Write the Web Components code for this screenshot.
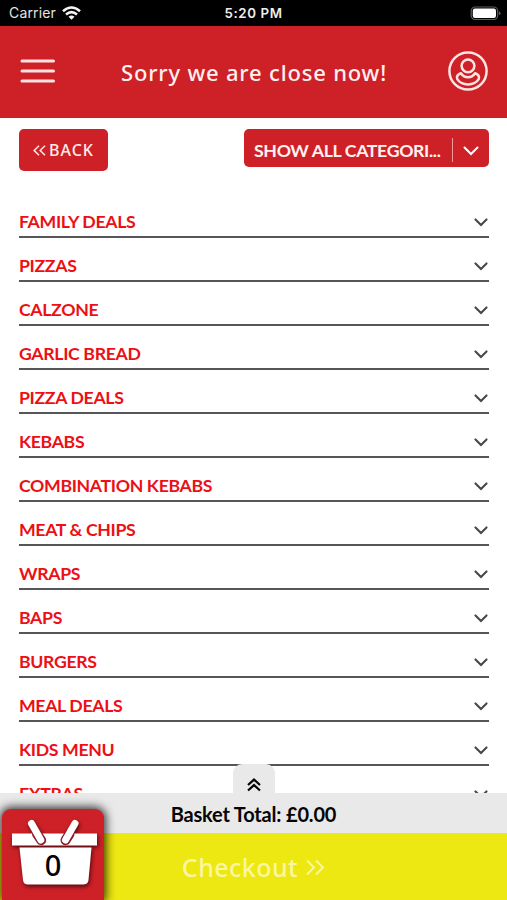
<!DOCTYPE html>
<html lang="en">
<head>
<meta charset="utf-8">
<title>Menu</title>
<style>
html,body{margin:0;height:100%;background:#fff;overflow:hidden}
</style>
</head>
<body>
<order-app></order-app>
<script>
const define = (name, html) => customElements.define(name, class extends HTMLElement {
  constructor() {
    super();
    const t = document.createElement('template');
    t.innerHTML = html;
    this.attachShadow({ mode: 'open' }).appendChild(t.content.cloneNode(true));
  }
});

define('status-bar', `
<style>
:host{display:grid;grid-template-columns:1fr auto 1fr;align-items:center;box-sizing:border-box;height:26px;background:#000;color:#e4e4e4;font:14px/24px Inter,sans-serif;padding:1px 6px 1px 9px}
.l{display:flex;align-items:center;gap:6px;letter-spacing:.15px}
.l svg{margin-top:-1px}
.t{font-weight:600;color:#eee;font-size:13.3px;letter-spacing:.6px;margin-left:-3px}
.r{display:flex;justify-content:flex-end}
svg{display:block}
</style>
<div class="l"><span>Carrier</span><svg width="19" height="14" viewBox="0 0 19 14"><g fill="none" stroke="#f4f4f4" stroke-width="2.5"><path d="M1 5.2Q9.500 -2.300 18 5.200"/><path d="M4 8.500Q9.500 3.700 15 8.500"/></g><path d="M9.500 13.700L6.500 10.700Q9.500 8.300 12.500 10.700Z" fill="#f4f4f4"/></svg></div>
<span class="t">5:20 PM</span>
<div class="r"><svg width="31" height="15" viewBox="0 0 31 15"><rect x="1.200" y="1" width="26.500" height="12.500" rx="4" fill="none" stroke="#5e5e5e" stroke-width="1.200"/><rect x="2.800" y="2.600" width="23.200" height="9.400" rx="2.200" fill="#fff"/><path d="M29 5.200q3 2 0 4z" fill="#666"/></svg></div>
`);

define('menu-icon', `
<style>:host{display:block}svg{display:block}</style>
<svg width="36" height="26" viewBox="0 0 36 26" stroke="#ffe1e1" stroke-width="3" stroke-linecap="round"><path d="M2 3H33.500M2 13H33.500M2 23H33.500"/></svg>
`);

define('account-icon', `
<style>:host{display:block}svg{display:block}</style>
<svg width="40" height="40" viewBox="0 0 40 40" fill="none" stroke="#ffe4e4" stroke-width="2.500"><circle cx="20" cy="20" r="18.600"/><circle cx="20" cy="14.800" r="6.400"/><path d="M12.900 22.200C9.600 23.700 8.300 26 9.300 28.200C11.400 31.600 15.300 33.400 20 33.400S28.600 31.600 30.700 28.200C31.700 26 30.400 23.700 27.100 22.200Q24.200 26.300 20 26.300T12.900 22.200Z" stroke-linejoin="round"/></svg>
`);

define('app-header', `
<style>
:host{display:flex;align-items:center;justify-content:space-between;box-sizing:border-box;height:92px;background:#cd2127;padding:0 19px 2px 20px;color:#fff0ee;font:500 22px/30px "Noto Sans","Open Sans",sans-serif;letter-spacing:.82px}
h1{font:inherit;margin:2px 0 0 4px;white-space:nowrap}
</style>
<menu-icon></menu-icon><h1><slot></slot></h1><account-icon></account-icon>
`);

define('back-button', `
<style>
:host{display:flex;align-items:center;justify-content:center;gap:3px;box-sizing:border-box;width:89px;height:42px;border-radius:5px;background:#cd2127;color:#ffeceb;font:500 16px/20px "Noto Sans","Open Sans",sans-serif;letter-spacing:1.05px}
</style>
<svg width="13" height="11" viewBox="0 0 13 11" fill="none" stroke="#ffe4e2" stroke-width="1.600"><path d="M6 .8L1.200 5.500L6 10.200M12 .8L7.200 5.500L12 10.200"/></svg><span><slot></slot></span>
`);

define('category-select', `
<style>
:host{display:flex;align-items:center;box-sizing:border-box;width:245px;height:38px;border-radius:5px;background:#cd2127;color:#fff1f0;font:700 17.700px/24px Lato,sans-serif;letter-spacing:-.35px;padding:0 10px}
span{flex:1;padding-top:6px;white-space:nowrap}
i{width:1px;height:24px;background:#ef9a9c;margin-right:10px;margin-top:4px}
svg{margin-top:5px}
</style>
<span><slot></slot></span><i></i><svg width="16" height="10" viewBox="0 0 16 10" fill="none" stroke="#fff" stroke-width="2" stroke-linecap="round"><path d="M1.500 1.500L8 8L14.500 1.500"/></svg>
`);

define('category-row', `
<style>
:host{display:flex;align-items:center;justify-content:space-between;box-sizing:border-box;height:44px;border-bottom:2px solid #565658;padding:13px 1px 0 0;color:#ec1014;font:700 17.700px/24px Lato,sans-serif;letter-spacing:-.35px}
span{white-space:nowrap}
svg{margin-top:2px}
</style>
<span><slot></slot></span><svg width="14" height="9" viewBox="0 0 14 9" fill="none" stroke="#48484c" stroke-width="2.100" stroke-linecap="round"><path d="M1.500 1.400L7 6.900L12.500 1.400"/></svg>
`);

define('basket-badge', `
<style>
:host{position:absolute;left:2px;bottom:0;width:102px;height:91px;border-radius:9px 9px 0 0;background:#cd2127;box-shadow:0 0 10px 2px rgba(0,0,0,.78)}
svg{position:absolute;inset:0}
b{position:absolute;left:0;top:41px;width:102px;text-align:center;font:500 29px/30px "Noto Sans",sans-serif;color:#000}
</style>
<svg width="102" height="91" viewBox="0 0 102 91">
<g style="filter:drop-shadow(1px 2px 2px rgba(40,0,0,.75))">
<path fill="#fff" d="M10 24.500H95V36.500H10Z"/>
<path fill="#fff" d="M17.500 38.500H89.500L86.500 71Q86 75.500 81 75.500H26Q21.500 75.500 21 71Z"/>
<path d="M35 25L39.200 31.200M67.500 25L63.500 31.200" stroke="#8e1c28" stroke-width="10" stroke-linecap="round"/>
<path d="M29.500 14.500L38.800 31M73 14.500L63.500 31" stroke="#fff" stroke-width="7" stroke-linecap="round"/>
</g></svg><b><slot></slot></b>
`);

define('basket-footer', `
<style>
:host{display:block;position:relative;flex:none;height:107px}
.tab{position:absolute;left:233px;top:-29px;width:42px;height:29px;border-radius:9px 9px 0 0;background:#e9e9e9;display:flex;align-items:center;justify-content:center}
.tab svg{margin:12px 0 0 -1px}
.total{height:40px;background:#e9e9e9;display:flex;align-items:center;justify-content:center;color:#050505;font:700 20px/24px Lato,sans-serif;letter-spacing:-.18px;padding-top:1px;box-sizing:border-box}
.pay{height:67px;background:#ede712;display:flex;align-items:center;justify-content:center;gap:7px;color:#fbf6a0;font:500 25px/34px "Noto Sans","Open Sans",sans-serif;letter-spacing:.45px;padding-top:1px;box-sizing:border-box}
.total,.pay{white-space:nowrap}
</style>
<div class="tab"><svg width="14" height="14" viewBox="0 0 14 14" fill="none" stroke="#050505" stroke-width="2.200"><path d="M1 7L7 1.600L13 7M1 12.500L7 7.100L13 12.500"/></svg></div>
<div class="total"><span>Basket Total: £0.00</span></div>
<div class="pay"><span>Checkout</span><svg width="20" height="17" viewBox="0 0 20 17" fill="none" stroke="#fbf6a0" stroke-width="2"><path d="M2 1.500L9 8.500L2 15.500M11 1.500L18 8.500L11 15.500"/></svg></div>
<basket-badge>0</basket-badge>
`);

define('order-app', `
<style>
:host{display:flex;flex-direction:column;width:507px;height:900px;overflow:hidden;background:#fff}
status-bar,app-header{flex:none}
main{flex:1;min-height:0;overflow:hidden;padding:11px 18px 0 19px}
.tools{display:flex;justify-content:space-between;align-items:flex-start;height:65px}
</style>
<status-bar></status-bar>
<app-header>Sorry we are close now!</app-header>
<main>
<div class="tools"><back-button>BACK</back-button><category-select>SHOW ALL CATEGORI...</category-select></div>
${['FAMILY DEALS','PIZZAS','CALZONE','GARLIC BREAD','PIZZA DEALS','KEBABS','COMBINATION KEBABS','MEAT &amp; CHIPS','WRAPS','BAPS','BURGERS','MEAL DEALS','KIDS MENU','EXTRAS'].map(n => `<category-row>${n}</category-row>`).join('')}
</main>
<basket-footer></basket-footer>
`);
</script>
</body>
</html>
